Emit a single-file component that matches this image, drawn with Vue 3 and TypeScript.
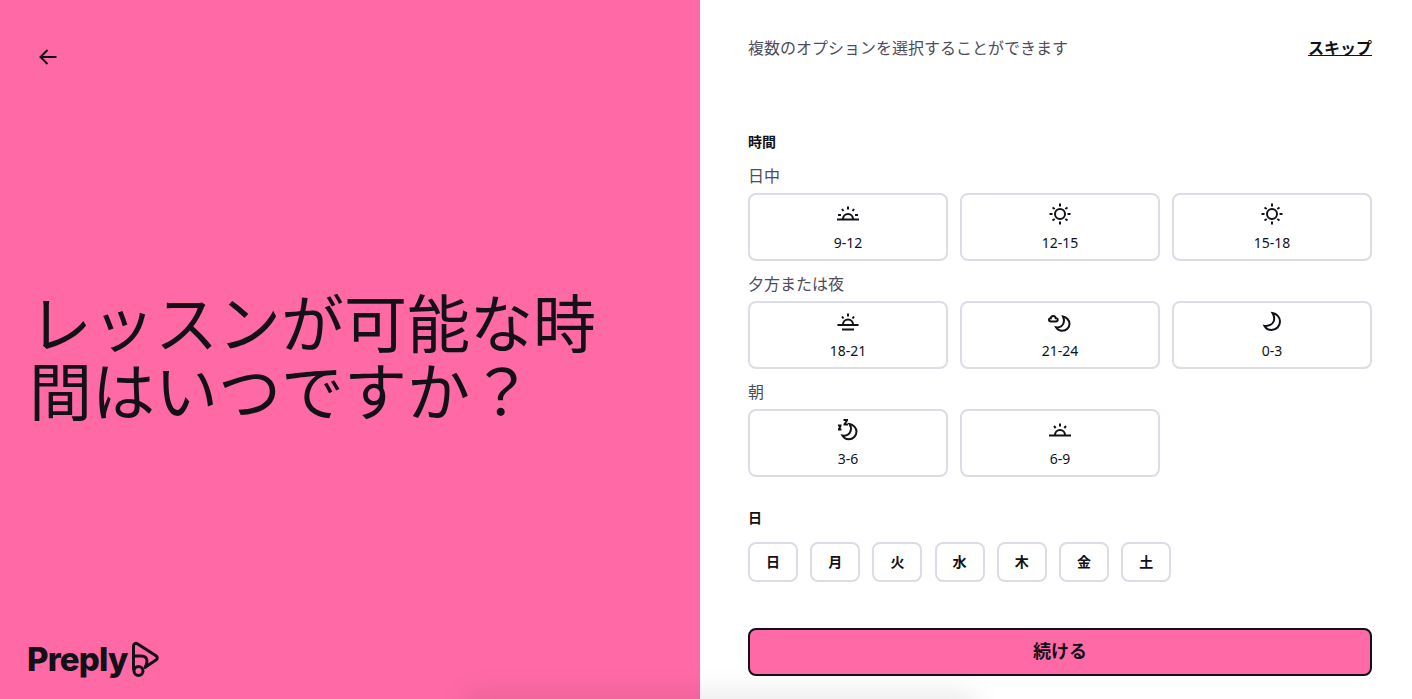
<script setup lang="ts">
interface Slot {
  label: string
  icon: string
}

interface Group {
  title: string
  slots: Slot[]
}

const groups: Group[] = [
  {
    title: '日中',
    slots: [
      { label: '9-12', icon: 'rise' },
      { label: '12-15', icon: 'sun' },
      { label: '15-18', icon: 'sun' }
    ]
  },
  {
    title: '夕方または夜',
    slots: [
      { label: '18-21', icon: 'set' },
      { label: '21-24', icon: 'cloudmoon' },
      { label: '0-3', icon: 'moon' }
    ]
  },
  {
    title: '朝',
    slots: [
      { label: '3-6', icon: 'zmoon' },
      { label: '6-9', icon: 'dawn' }
    ]
  }
]

const days = ['日', '月', '火', '水', '木', '金', '土']
</script>

<template>
  <div class="page">
    <section class="left">
      <button class="back" aria-label="戻る">
        <svg width="24" height="24" viewBox="0 0 24 24" fill="none" stroke="#121117" stroke-width="2">
          <path d="M20.500 12H5M11.500 5 4.500 12l7 7" />
        </svg>
      </button>
      <h1 class="headline">レッスンが可能な時間はいつですか？</h1>
      <div class="logo">
        <span class="logo-text">Preply</span>
        <svg width="30" height="38" viewBox="0 0 30 38" fill="none" stroke="#121117" stroke-width="3" stroke-linejoin="round" stroke-linecap="round">
          <path d="M3.500 6c0-2 2-3.300 3.800-2.200l18.700 12c1.700 1.100 1.700 3.200 0 4.300L15.500 27" />
          <path d="M3.500 6v23M3.500 16h8c3.500 0 5.500 2.200 5.500 5 0 2.500-.8 4.500-2 6.500" />
          <circle cx="8.500" cy="31" r="4.500" />
        </svg>
      </div>
    </section>

    <section class="right">
      <div class="top-row">
        <p class="hint">複数のオプションを選択することができます</p>
        <a class="skip" href="#">スキップ</a>
      </div>

      <h2 class="section-title time-title">時間</h2>
      <div v-for="group in groups" :key="group.title" class="group">
        <div class="group-title">{{ group.title }}</div>
        <div class="slots">
          <button v-for="slot in group.slots" :key="slot.label" class="slot">
            <svg class="slot-icon" width="24" height="24" viewBox="0 0 24 24" fill="none" stroke="#121117" stroke-width="2">
              <template v-if="slot.icon === 'rise'">
                <path d="M1 17.500h22M7 17a5 5 0 0 1 10 0" />
                <path d="M12 4.500v3M6 7l1.500 2M18 7l-1.500 2M2 13h3M19 13h3" />
              </template>
              <template v-else-if="slot.icon === 'sun'">
                <circle cx="12" cy="12" r="5" />
                <path d="M12 1.500v3M12 19.500v3M1.500 12h3M19.500 12h3M4.500 5.500l2.200 1.500M17.300 17l2.200 1.500M4.500 18.500l2.200-1.500M17.300 7l2.200-1.500" />
              </template>
              <template v-else-if="slot.icon === 'set'">
                <path d="M1.500 15h21M6 19.500h12M7 14.500a5 5 0 0 1 10 0" />
                <path d="M12 3.500v3M6 6.500l1.500 2M18 6.500l-1.500 2" />
              </template>
              <template v-else-if="slot.icon === 'cloudmoon'">
                <path d="M3 11.500c-1.200 0-2-.7-2-1.700 0-1 .8-1.600 1.800-1.500.2-1.400 1.200-2.300 2.500-2.300 1.300 0 2.200.9 2.400 2.200 1.200-.1 2 .6 2 1.600 0 1-.8 1.700-2 1.700z" />
                <path d="M15 6.500c3.300.6 6.500 3.500 6.500 7.200 0 4-3.200 7-7.300 7-2.600 0-4.900-1.300-6.200-3.400 3.300.4 6.500-1.300 7.600-4.300.7-2 .5-4.200-.6-6.500z" />
              </template>
              <template v-else-if="slot.icon === 'moon'">
                <path d="M12.500 3c4.200.7 7.500 4.200 7.500 8.500 0 4.800-3.800 8.500-8.300 8.500-3 0-5.800-1.600-7.200-4.100 4.200.6 8-1.400 9.300-4.900.8-2.400.4-5.100-1.300-8z" />
              </template>
              <template v-else-if="slot.icon === 'zmoon'">
                <path d="M13.500 6c3.800.6 7 3.800 7 7.600 0 4.300-3.500 7.700-7.700 7.700-2.800 0-5.100-1.500-6.400-3.700 3.800.5 7-1.300 8.200-4.400.7-2.200.5-4.700-1.100-7.200z" />
                <path d="M2 7.500h3.500M4.800 7.500 2.800 11.500M2 11.500h3.500M7.500 2h4.500M11.300 2 8.300 6.500M7.500 6.500h4.500" stroke-width="1.800" />
              </template>
              <template v-else>
                <path d="M1 17.500h22M7 17a5 5 0 0 1 10 0" />
                <path d="M12 5.500v3M6 8l1.700 2M18 8l-1.700 2" />
              </template>
            </svg>
            <span class="slot-label">{{ slot.label }}</span>
          </button>
        </div>
      </div>

      <h2 class="section-title day-title">日</h2>
      <div class="days">
        <button v-for="day in days" :key="day" class="day">{{ day }}</button>
      </div>

      <button class="continue">続ける</button>
    </section>
    <div class="fade"></div>
  </div>
</template>

<style>
html,
body {
  margin: 0;
  overflow: hidden;
}
</style>

<style scoped>
.page {
  position: relative;
  display: flex;
  width: 1412px;
  height: 699px;
  overflow: hidden;
  background: #fff;
  color: #121117;
  font-family: "Noto Sans", "Open Sans", "Noto Sans CJK JP", sans-serif;
}

.left {
  width: 700px;
  height: 699px;
  box-sizing: border-box;
  flex: none;
  display: flex;
  flex-direction: column;
  background: #ff6aa6;
  padding: 45px 28px 20px 36px;
}

.back {
  width: 24px;
  height: 24px;
  padding: 0;
  border: 0;
  background: none;
}

.headline {
  margin: 222px 0 0 -7px;
  width: 600px;
  height: 136px;
  font-family: "Liberation Sans", "Noto Sans CJK JP", sans-serif;
  font-size: 63px;
  line-height: 68px;
  font-weight: 400;
}

.logo {
  margin: auto 0 0 -9px;
  display: flex;
  align-items: center;
  gap: 2px;
  height: 40px;
}

.logo-text {
  font-family: Inter, sans-serif;
  font-weight: 800;
  font-size: 33px;
  letter-spacing: -0.8px;
  line-height: 40px;
}

.right {
  flex: 1;
  box-sizing: border-box;
  padding: 38px 40px 0 48px;
  display: flex;
  flex-direction: column;
}

.top-row {
  display: flex;
  justify-content: space-between;
  align-items: center;
  height: 20px;
}

.hint {
  margin: 0;
  font-size: 16px;
  line-height: 20px;
  color: #4d4c5c;
}

.skip {
  color: #121117;
  font-size: 16px;
  font-weight: 700;
  line-height: 20px;
}

.section-title {
  margin: 0;
  font-size: 14px;
  font-weight: 700;
  line-height: 20px;
}

.time-title {
  margin-top: 74px;
}

.group + .group {
  margin-top: 13px;
}

.time-title + .group {
  margin-top: 14px;
}

.group-title {
  height: 20px;
  font-size: 16px;
  line-height: 20px;
  color: #4d4c5c;
  margin-bottom: 7px;
}

.slots {
  display: grid;
  grid-template-columns: repeat(3, 200px);
  gap: 12px;
}

.slot {
  height: 68px;
  box-sizing: border-box;
  border: 2px solid #dcdce8;
  border-radius: 8px;
  background: #fff;
  padding: 7px 0 0;
  display: flex;
  flex-direction: column;
  align-items: center;
  font-family: inherit;
  color: #121117;
}

.slot-label {
  font-size: 14px;
  line-height: 20px;
  margin-top: 7px;
}

.slot-icon {
  display: block;
}

.day-title {
  margin-top: 31px;
}

.days {
  display: flex;
  gap: 12.200px;
  margin-top: 14px;
}

.day {
  width: 50px;
  height: 40px;
  box-sizing: border-box;
  border: 2px solid #dcdce8;
  border-radius: 8px;
  background: #fff;
  padding: 0 0 2px;
  font-family: inherit;
  font-size: 14px;
  font-weight: 600;
  color: #121117;
}

.continue {
  margin-top: 46px;
  height: 48px;
  box-sizing: border-box;
  border: 2px solid #121117;
  border-radius: 8px;
  background: #ff6aa6;
  padding: 0 0 4px;
  font-family: inherit;
  font-size: 18px;
  font-weight: 700;
  color: #121117;
}

.fade {
  position: absolute;
  left: 470px;
  bottom: -30px;
  width: 500px;
  height: 30px;
  box-shadow: 0 0 30px 4px rgba(18, 17, 23, 0.1);
}
</style>
